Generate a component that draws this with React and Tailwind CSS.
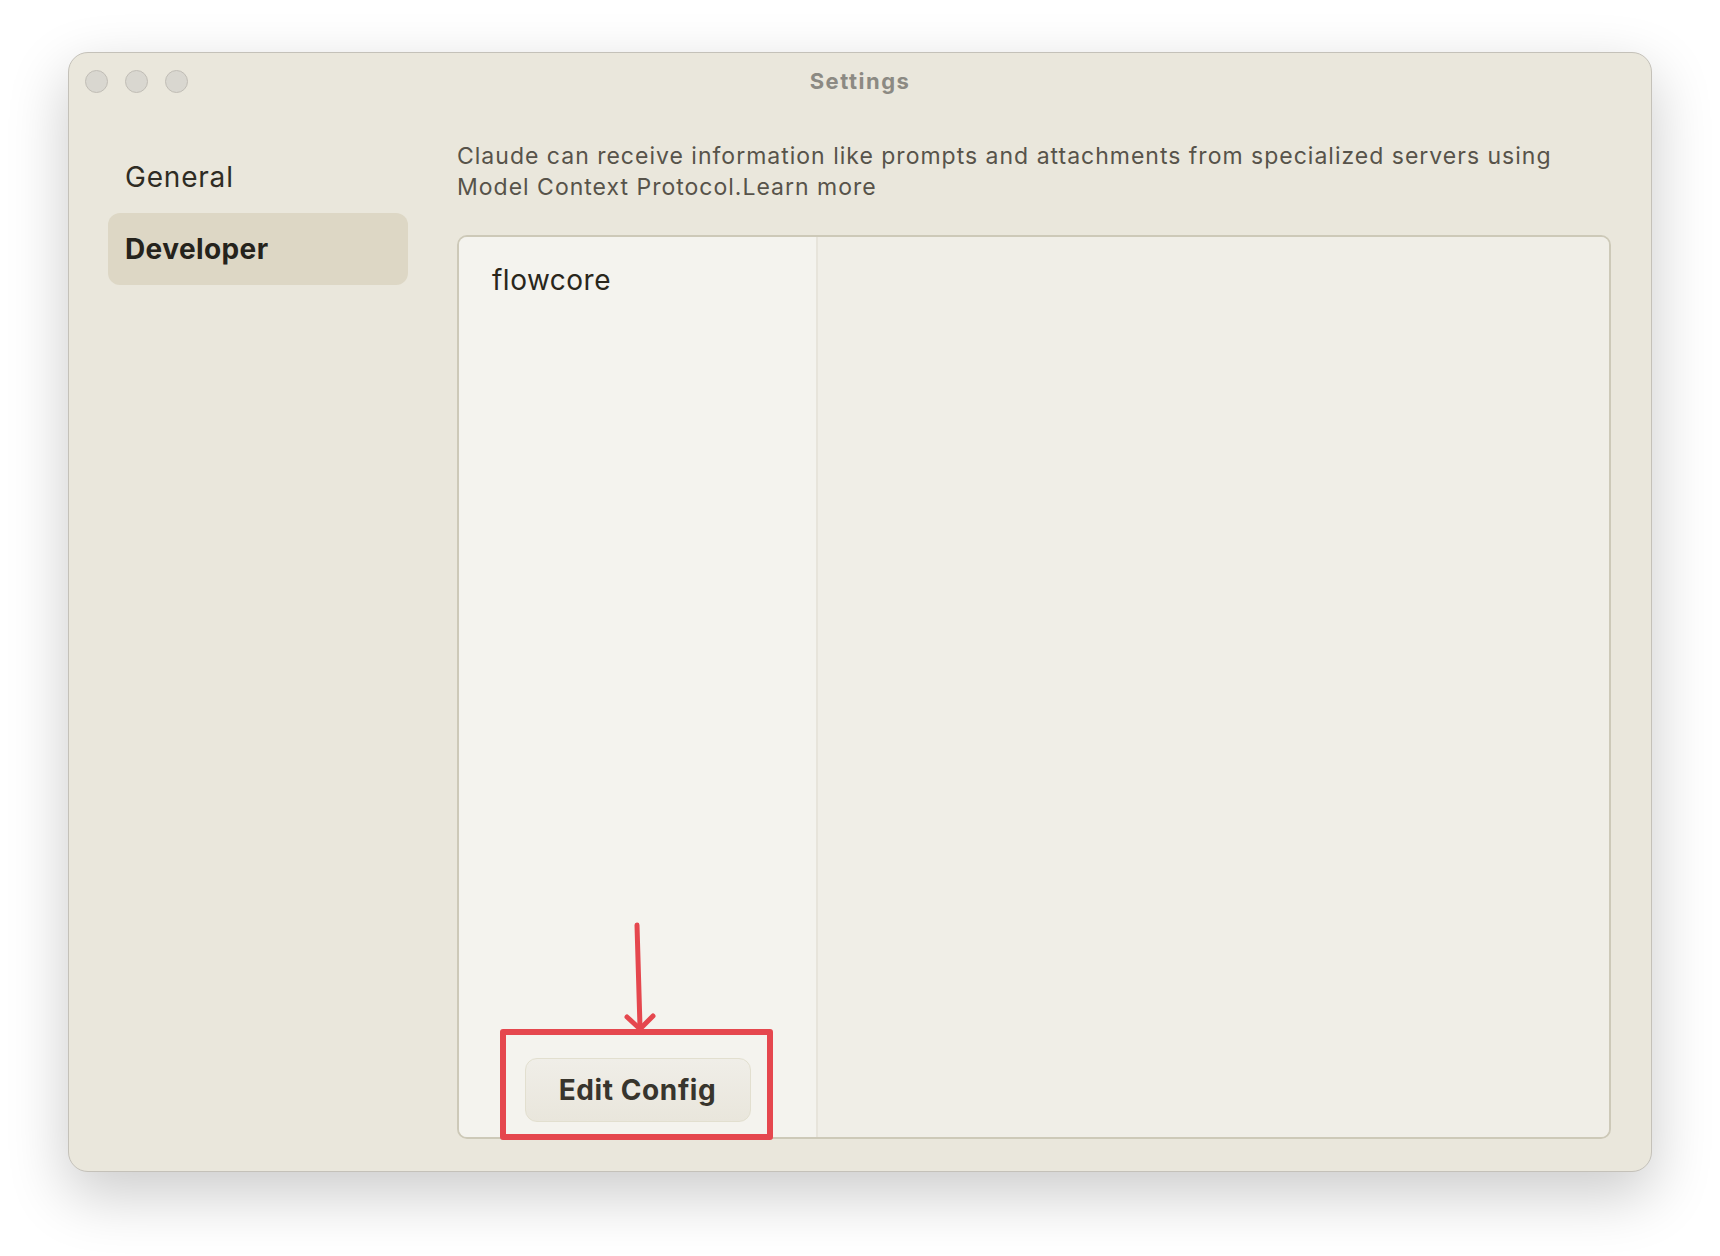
export default function App() {
  return (
    <div className="relative w-[1720px] h-[1256px] bg-white pl-[68px] pt-[52px] font-[Inter,'Noto_Sans',sans-serif]">
      <div className="w-[1584px] h-[1120px] rounded-[20px] bg-[#eae7dc] border border-[#c4c1b9] shadow-[0_22px_60px_2px_rgba(0,0,0,0.2)] flex flex-col overflow-hidden">
        {/* title bar */}
        <div className="h-[56px] shrink-0 grid grid-cols-[1fr_auto_1fr] items-center px-[16px]">
          <div className="flex items-center gap-[17px]">
            <span className="w-[23px] h-[23px] rounded-full bg-[#d9d7d0] border border-[#c0bdb5]" />
            <span className="w-[23px] h-[23px] rounded-full bg-[#d9d7d0] border border-[#c0bdb5]" />
            <span className="w-[23px] h-[23px] rounded-full bg-[#d9d7d0] border border-[#c0bdb5]" />
          </div>
          <div className="text-[22px] font-bold text-[#8c8a83] tracking-[1.5px]">Settings</div>
          <div />
        </div>
        {/* body */}
        <div className="flex flex-1 pt-[32px] pb-[32px] pr-[40px] pl-[39px] min-h-0">
          <div className="w-[300px] shrink-0 flex flex-col">
            <div className="h-[72px] flex items-center px-[17px] rounded-[12px] text-[28px] text-[#2f2c24] tracking-[0.8px]">General</div>
            <div className="h-[72px] flex items-center px-[17px] rounded-[12px] bg-[#ddd7c5] text-[28px] font-bold text-[#25231c] tracking-[0.4px]">Developer</div>
          </div>
          <div className="flex-1 ml-[49px] flex flex-col min-w-0">
            <p className="text-[23px] leading-[31px] text-[#57534a] tracking-[1px]">
              Claude can receive information like prompts and attachments from specialized servers using Model Context Protocol.Learn more
            </p>
            <div className="mt-[32px] flex-1 flex border-2 border-[#cdc9b8] rounded-[10px] overflow-hidden">
              <div className="w-[359px] shrink-0 bg-[#f4f3ee] border-r-2 border-[#e7e4db] flex flex-col justify-between">
                <div className="pl-[33px] pt-[25px] text-[28px] leading-[36px] text-[#29261b] tracking-[0.5px]">flowcore</div>
                <div className="flex justify-center pb-[15px]">
                  <button className="w-[226px] h-[64px] rounded-[12px] border border-[#e2dfcf] bg-linear-to-b from-[#f0eee8] to-[#e9e6dc] text-[28px] font-bold text-[#38352d] tracking-[0.6px]">
                    Edit Config
                  </button>
                </div>
              </div>
              <div className="flex-1 bg-[#f0eee7]" />
            </div>
          </div>
        </div>
      </div>

      {/* annotation overlay */}
      <svg className="absolute left-[620px] top-[915px]" width="40" height="120" viewBox="0 0 40 120" fill="none">
        <path d="M17 10 L20 112" stroke="#e5474e" strokeWidth="5" strokeLinecap="round" />
        <path d="M7 102 L20 114 L33 101" stroke="#e5474e" strokeWidth="5" strokeLinecap="round" strokeLinejoin="round" />
      </svg>
      <div className="absolute left-[500px] top-[1029px] w-[273px] h-[111px] border-[6px] border-[#e5474e] rounded-[3px]" />
    </div>
  );
}
